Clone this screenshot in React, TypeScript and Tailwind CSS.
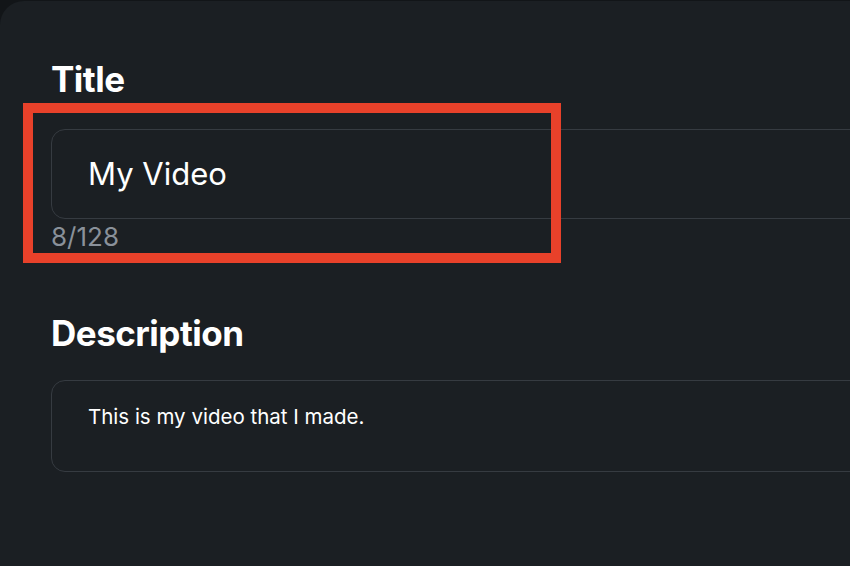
import React from "react";

export default function App() {
  return (
    <div
      className="relative w-[850px] h-[566px] overflow-hidden bg-[#121518]"
      style={{ fontFamily: "Inter, 'Noto Sans', sans-serif" }}
    >
      <div className="mt-[1px] h-[565px] rounded-tl-[24px] bg-[#1b1f23] pl-[51px] pt-[58px]">
        <div className="text-[35px] leading-[40px] font-bold text-white tracking-[-0.5px]">Title</div>
        <div className="mt-[30px] w-[820px] h-[90px] rounded-[14px] border border-[#363b41] flex items-center pl-[36px]">
          <span className="text-[31px] text-white">My Video</span>
        </div>
        <div className="mt-[2px] text-[26px] leading-[32px] text-[#8a919a]">8/128</div>
        <div className="mt-[60px] text-[35px] leading-[40px] font-bold text-white tracking-[-0.5px]">Description</div>
        <div className="mt-[27px] w-[820px] h-[92px] rounded-[14px] border border-[#363b41] pl-[36px] pt-[21px]">
          <span className="text-[20.5px] text-white">This is my video that I made.</span>
        </div>
      </div>
      <div className="absolute left-[23px] top-[103px] w-[538px] h-[160px] border-[10px] border-[#e8412a]" />
    </div>
  );
}
